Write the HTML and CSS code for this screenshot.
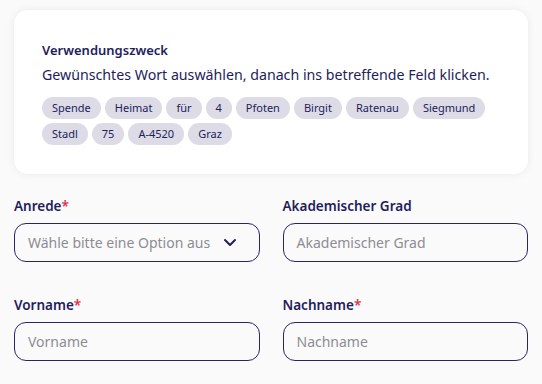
FILE: index.html
```html
<!DOCTYPE html>
<html>
<head>
    <title>Verwendungszweck</title>
    <link rel="stylesheet" href="styles.css">
</head>
<body>
    <div class="container">
        <div class="card">
            <h3>Verwendungszweck</h3>
            <p>Gewünschtes Wort auswählen, danach ins betreffende Feld klicken.</p>
            <div class="chips">
                <span class="chip">Spende</span>
                <span class="chip">Heimat</span>
                <span class="chip">für</span>
                <span class="chip">4</span>
                <span class="chip">Pfoten</span>
                <span class="chip">Birgit</span>
                <span class="chip">Ratenau</span>
                <span class="chip">Siegmund</span>
                <span class="chip">Stadl</span>
                <span class="chip">75</span>
                <span class="chip">A-4520</span>
                <span class="chip">Graz</span>
            </div>
        </div>

        <div class="form">
            <div class="field">
                <label>Anrede<span class="req">*</span></label>
                <div class="input select">
                    <span>Wähle bitte eine Option aus</span>
                    <svg width="14" height="9" viewBox="0 0 14 9"><path d="M2 2l5 5 5-5" fill="none" stroke="#231d5c" stroke-width="2" stroke-linecap="round" stroke-linejoin="round"/></svg>
                </div>
            </div>
            <div class="field">
                <label>Akademischer Grad</label>
                <div class="input"><span>Akademischer Grad</span></div>
            </div>
            <div class="field">
                <label>Vorname<span class="req">*</span></label>
                <div class="input"><span>Vorname</span></div>
            </div>
            <div class="field">
                <label>Nachname<span class="req">*</span></label>
                <div class="input"><span>Nachname</span></div>
            </div>
        </div>
    </div>
</body>
</html>
```

FILE: styles.css
```css
body {
    margin: 0;
    background: #fafafb;
    font-family: "Noto Sans", sans-serif;
    color: #231d5c;
}

.container {
    padding: 10px 14px 0 14px;
}

.card {
    background: #fff;
    border-radius: 14px;
    box-shadow: 0 0 8px rgba(0, 0, 0, 0.07);
    padding: 31px 28px 29px 28px;
}

.card h3 {
    margin: 0;
    font-size: 13px;
    font-weight: 600;
    line-height: 18px;
}

.card p {
    margin: 7px 0 13px 0;
    font-size: 14.2px;
    line-height: 18px;
}

.chips {
    display: flex;
    flex-wrap: wrap;
    gap: 4px 4px;
    width: 450px;
}

.chip {
    background: #dcdbe6;
    border-radius: 11px;
    height: 22px;
    line-height: 22px;
    padding: 0 10px;
    font-size: 11px;
}

.form {
    display: grid;
    grid-template-columns: 1fr 1fr;
    gap: 34px 23px;
    margin-top: 23px;
}

.field label {
    display: block;
    font-size: 13.5px;
    font-weight: 600;
    line-height: 18px;
    margin-bottom: 8px;
}

.req {
    color: #e5304a;
}

.input {
    display: flex;
    align-items: center;
    justify-content: space-between;
    height: 37px;
    border: 1.5px solid #2a2468;
    border-radius: 12px;
    padding: 0 22px 0 13px;
    font-size: 14px;
    color: #8d8c93;
}
```
